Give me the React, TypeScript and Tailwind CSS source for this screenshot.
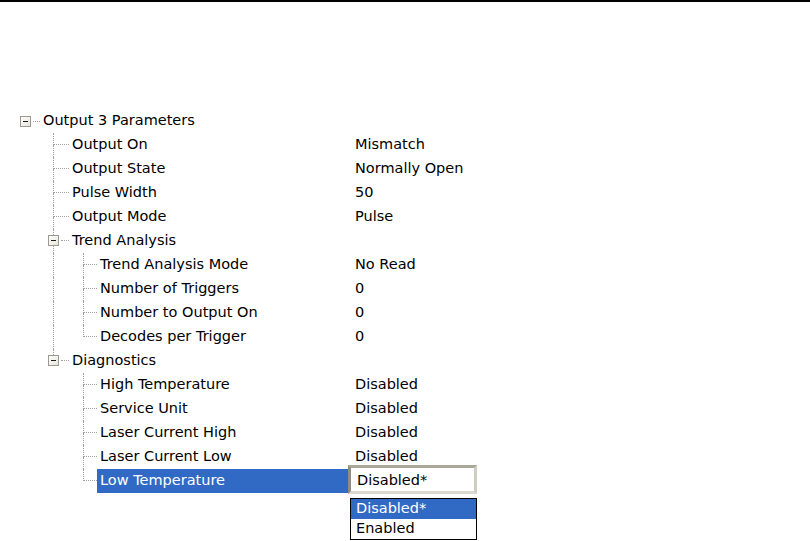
import React from "react";

type Row = {
  label: string;
  value?: string;
  depth: 0 | 1 | 2;
  kind: "root" | "leaf" | "last" | "node" | "lastnode";
  pipe?: boolean; // level-1 line continues through this depth-2 row
  selected?: boolean;
  combo?: boolean;
};

const rows: Row[] = [
  { label: "Output 3 Parameters", depth: 0, kind: "root" },
  { label: "Output On", value: "Mismatch", depth: 1, kind: "leaf" },
  { label: "Output State", value: "Normally Open", depth: 1, kind: "leaf" },
  { label: "Pulse Width", value: "50", depth: 1, kind: "leaf" },
  { label: "Output Mode", value: "Pulse", depth: 1, kind: "leaf" },
  { label: "Trend Analysis", depth: 1, kind: "node" },
  { label: "Trend Analysis Mode", value: "No Read", depth: 2, kind: "leaf", pipe: true },
  { label: "Number of Triggers", value: "0", depth: 2, kind: "leaf", pipe: true },
  { label: "Number to Output On", value: "0", depth: 2, kind: "leaf", pipe: true },
  { label: "Decodes per Trigger", value: "0", depth: 2, kind: "last", pipe: true },
  { label: "Diagnostics", depth: 1, kind: "lastnode" },
  { label: "High Temperature", value: "Disabled", depth: 2, kind: "leaf" },
  { label: "Service Unit", value: "Disabled", depth: 2, kind: "leaf" },
  { label: "Laser Current High", value: "Disabled", depth: 2, kind: "leaf" },
  { label: "Laser Current Low", value: "Disabled", depth: 2, kind: "leaf" },
  { label: "Low Temperature", depth: 2, kind: "last", selected: true, combo: true },
];

const dot = "border-dotted border-[#a0a0a0]";

function MinusBox() {
  return (
    <div className="flex h-[11px] w-[11px] shrink-0 items-center justify-center border border-[#9a9a8e] bg-gradient-to-br from-white to-[#e6e4dc]">
      <div className="h-px w-[5px] bg-[#1a1a1a]" />
    </div>
  );
}

function Connector({ last, wide }: { last: boolean; wide: boolean }) {
  return (
    <div className={`flex h-6 shrink-0 flex-col ${wide ? "w-[29px] pl-[13px]" : "w-[28px] pl-[14px]"}`}>
      <div className={`h-3 border-b border-l ${dot}`} />
      <div className={`h-3 ${last ? "" : `border-l ${dot}`}`} />
    </div>
  );
}

function Pipe({ on }: { on: boolean }) {
  return (
    <div className="h-6 w-[29px] shrink-0 pl-[13px]">
      {on && <div className={`h-6 border-l ${dot}`} />}
    </div>
  );
}

function NodeCell({ last }: { last: boolean }) {
  return (
    <div className="flex h-6 w-[29px] shrink-0 flex-col">
      <div className={`ml-[13px] h-[6px] border-l ${dot}`} />
      <div className="ml-[8px] flex h-[11px] items-center">
        <MinusBox />
        <div className={`ml-[2px] w-[8px] border-t ${dot}`} />
      </div>
      <div className={`ml-[13px] h-[7px] ${last ? "" : `border-l ${dot}`}`} />
    </div>
  );
}

function Combo() {
  return (
    <div className="relative -mt-[4px] h-[29px] w-[129px] self-start border-[3px] border-t-[#aca899] border-l-[#8e8c84] border-r-[#cfccc0] border-b-[#dcdad0] bg-white">
      <div className="flex h-full items-center pl-[6px] pt-[2px]">Disabled*</div>
      <div className="absolute left-[-1px] top-[30px] w-[127px] border border-black bg-white">
        <div className="flex h-[20px] items-center bg-[#316ac5] pl-[5px] text-white">Disabled*</div>
        <div className="flex h-[20px] items-center pl-[5px]">Enabled</div>
      </div>
    </div>
  );
}

function TreeRow({ row }: { row: Row }) {
  let guides: React.ReactNode;
  if (row.kind === "root") {
    guides = (
      <div className="flex h-6 w-[40px] shrink-0 items-center pl-[20px]">
        <MinusBox />
        <div className={`ml-[2px] w-[7px] border-t ${dot}`} />
      </div>
    );
  } else if (row.depth === 1) {
    guides = (
      <>
        <div className="w-[40px] shrink-0" />
        {row.kind === "node" || row.kind === "lastnode" ? (
          <NodeCell last={row.kind === "lastnode"} />
        ) : (
          <Connector last={row.kind === "last"} wide />
        )}
      </>
    );
  } else {
    guides = (
      <>
        <div className="w-[40px] shrink-0" />
        <Pipe on={!!row.pipe} />
        <Connector last={row.kind === "last"} wide={false} />
      </>
    );
  }

  return (
    <div className="flex h-6">
      <div className="flex w-[348px] shrink-0">
        {guides}
        <div
          className={`flex flex-1 items-center pl-[3px] ${
            row.selected ? "bg-[#316ac5] text-white" : ""
          }`}
        >
          {row.label}
        </div>
      </div>
      {row.combo ? (
        <Combo />
      ) : (
        <div className="flex items-center pl-[7px]">{row.value}</div>
      )}
    </div>
  );
}

export default function App() {
  return (
    <div
      className="h-[541px] w-[810px] overflow-hidden bg-white text-[14.5px] text-black"
      style={{ fontFamily: '"DejaVu Sans", Tahoma, sans-serif' }}
    >
      <div className="h-[2px] bg-black" />
      <div className="mt-[107px] flex flex-col">
        {rows.map((r) => (
          <TreeRow key={r.label} row={r} />
        ))}
      </div>
    </div>
  );
}
